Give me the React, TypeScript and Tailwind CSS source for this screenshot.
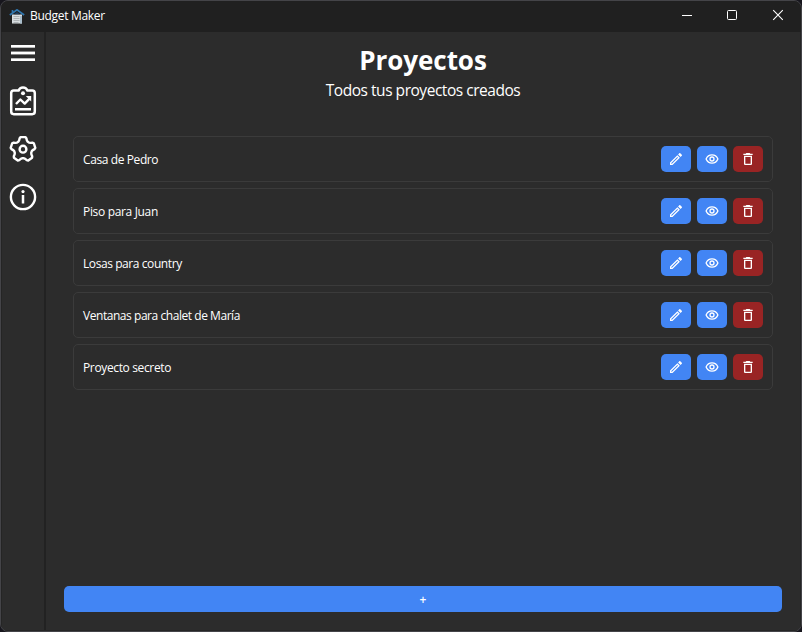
import type { ReactNode } from "react";
import { MdOutlineEdit, MdDeleteOutline } from "react-icons/md";

const projects = [
  { name: "Casa de Pedro", tracking: "tracking-[-0.4px]" },
  { name: "Piso para Juan", tracking: "tracking-[-0.33px]" },
  { name: "Losas para country", tracking: "tracking-[-0.42px]" },
  { name: "Ventanas para chalet de María", tracking: "tracking-[-0.45px]" },
  { name: "Proyecto secreto", tracking: "tracking-[-0.36px]" },
];

function gearPath() {
  const points: string[] = [];
  for (let i = 0; i < 5; i++) {
    const base = -90 + i * 72;
    for (const [offset, radius] of [[-17, 11.5], [-11, 12.4], [11, 12.4], [17, 11.5], [23, 9.8], [30, 9], [42, 9], [49, 9.8]]) {
      const a = ((base + offset) * Math.PI) / 180;
      points.push(`${(14 + radius * Math.cos(a)).toFixed(2)} ${(14.3 + radius * Math.sin(a)).toFixed(2)}`);
    }
  }
  return `M${points.join("L")}Z`;
}

function HouseIcon() {
  return (
    <svg width="16" height="16" viewBox="0 0 16 16" fill="none">
      <path d="M3 5.5h10V14.5H3z" fill="#d8dde0" />
      <path d="M11 7h2v7.5h-2z" fill="#a9bdcb" />
      <path d="M4.5 7.5h6M4.5 9.5h6M4.5 11.5h6M4.5 13.5h5" stroke="#929799" strokeWidth=".6" />
      <path d="M.8 6 8 .8 15.2 6M3.5 1v3" stroke="#2f75ad" strokeWidth="1.7" />
      <path d="M5 5.2 8 3l3 2.2z" fill="#1d3f60" />
    </svg>
  );
}

function MenuIcon() {
  return (
    <svg width="28" height="28" viewBox="0 0 28 28" shapeRendering="crispEdges">
      <path d="M2 6h24v2H2zM2 13h24v2H2zM2 20h24v2H2z" fill="#fff" />
      <path d="M2 8h24v1H2zM2 19h24v1H2z" fill="#b8b8b8" />
      <path d="M2 12h24v1H2zM2 15h24v1H2z" fill="#858585" />
    </svg>
  );
}

function ReportIcon() {
  return (
    <svg width="28" height="32" viewBox="0 0 28 32" fill="none" stroke="#fff" strokeWidth="2.5" strokeLinejoin="round">
      <path d="M9.6 4.6H4.8Q2.2 4.6 2.2 7.2V25.6Q2.2 28.2 4.8 28.2H23.2Q25.8 28.2 25.8 25.6V7.2Q25.8 4.6 23.2 4.6H18.4C17.7 2.6 16.2 1.6 14 1.6S10.3 2.6 9.6 4.6Z" />
      <path d="m7 18 4.4-4.5 4.3 4.1 4.8-5" strokeWidth="2.4" />
      <path d="M16.8 10h5.4v5.4z" fill="#fff" stroke="none" />
      <path d="M6 23.2h16" strokeWidth="2.6" />
      <circle cx="14" cy="7.2" r="2" fill="#fff" stroke="none" />
    </svg>
  );
}

function SettingsIcon() {
  return (
    <svg width="28" height="28" viewBox="0 0 28 28" fill="none" stroke="#fff" strokeWidth="2.4" strokeLinejoin="round">
      <path d={gearPath()} />
      <circle cx="14" cy="14.2" r="3.4" />
    </svg>
  );
}

function InfoIcon() {
  return (
    <svg width="28" height="28" viewBox="0 0 28 28" fill="none" stroke="#fff">
      <circle cx="14" cy="14" r="12.1" strokeWidth="2.4" />
      <path d="M14 12v8.6" strokeWidth="2.5" />
      <circle cx="14" cy="8.6" r="1.6" fill="#fff" stroke="none" />
    </svg>
  );
}

function EyeIcon() {
  return (
    <svg width="14" height="14" viewBox="0 0 14 14" fill="none" stroke="currentColor" strokeWidth="1.3">
      <path d="M1.1 7C2.2 4.4 4.4 2.9 7 2.9S11.8 4.4 12.9 7C11.8 9.6 9.6 11.1 7 11.1S2.2 9.6 1.1 7Z" strokeLinejoin="round" />
      <circle cx="7" cy="7" r="2" />
    </svg>
  );
}

function ActionButton({ label, danger, children }: { label: string; danger?: boolean; children: ReactNode }) {
  return (
    <button
      aria-label={label}
      className={`flex h-[26px] w-[30px] items-center justify-center rounded-[5px] text-sm text-white ${danger ? "bg-[#992424]" : "bg-[#4285f4]"}`}
    >
      {children}
    </button>
  );
}

export default function App() {
  return (
    <div className="h-[632px] w-[802px] bg-[#17161d] font-['Open_Sans','Noto_Sans',sans-serif] text-white">
      <div className="flex h-full flex-col overflow-hidden rounded-lg border border-[#444448] bg-[#2c2c2c]">
        <header className="flex h-[31px] shrink-0 items-center bg-[#202020] pl-2">
          <HouseIcon />
          <span className="ml-[5px] flex-1 pb-0.5 text-xs leading-4 tracking-[-0.3px]">Budget Maker</span>
          <svg width="138" height="31" viewBox="0 0 138 31" fill="none" stroke="#fff">
            <path d="M19 14.5h10" />
            <rect x="64.5" y="9.5" width="9" height="9" rx="1" />
            <path d="m110.2 9.2 9.6 9.6m0-9.6-9.6 9.6" strokeWidth="1.1" />
          </svg>
        </header>
        <div className="flex min-h-0 flex-1 border-x border-b border-[#252525]">
          <nav className="flex w-[44px] shrink-0 flex-col items-center border-r-2 border-[#222222] pt-[7px]">
            <MenuIcon />
            <div className="mt-[19px]"><ReportIcon /></div>
            <div className="mt-[17px]"><SettingsIcon /></div>
            <div className="mt-5"><InfoIcon /></div>
          </nav>
          <main className="flex flex-1 flex-col items-center px-[18px] pb-[18px]">
            <h1 className="mt-[10px] text-[26px] leading-9 font-bold tracking-[-0.05px]">Proyectos</h1>
            <p className="text-[15.5px] leading-6 tracking-[-0.47px]">Todos tus proyectos creados</p>
            <ul className="mt-[34px] flex w-[700px] flex-col gap-1.5">
              {projects.map((project) => (
                <li key={project.name} className="flex h-[46px] items-center justify-between rounded-[5px] border border-[#3b3b3b] px-[9px]">
                  <span className={`pt-0.5 text-xs leading-4 ${project.tracking}`}>{project.name}</span>
                  <div className="flex gap-1.5">
                    <ActionButton label="Editar"><MdOutlineEdit size={16} /></ActionButton>
                    <ActionButton label="Ver"><EyeIcon /></ActionButton>
                    <ActionButton label="Eliminar" danger><MdDeleteOutline size={16} /></ActionButton>
                  </div>
                </li>
              ))}
            </ul>
            <button className="mt-auto flex h-[26px] w-full items-center justify-center rounded-[5px] bg-[#4285f4] pt-px text-xs leading-none font-semibold">+</button>
          </main>
        </div>
      </div>
    </div>
  );
}
